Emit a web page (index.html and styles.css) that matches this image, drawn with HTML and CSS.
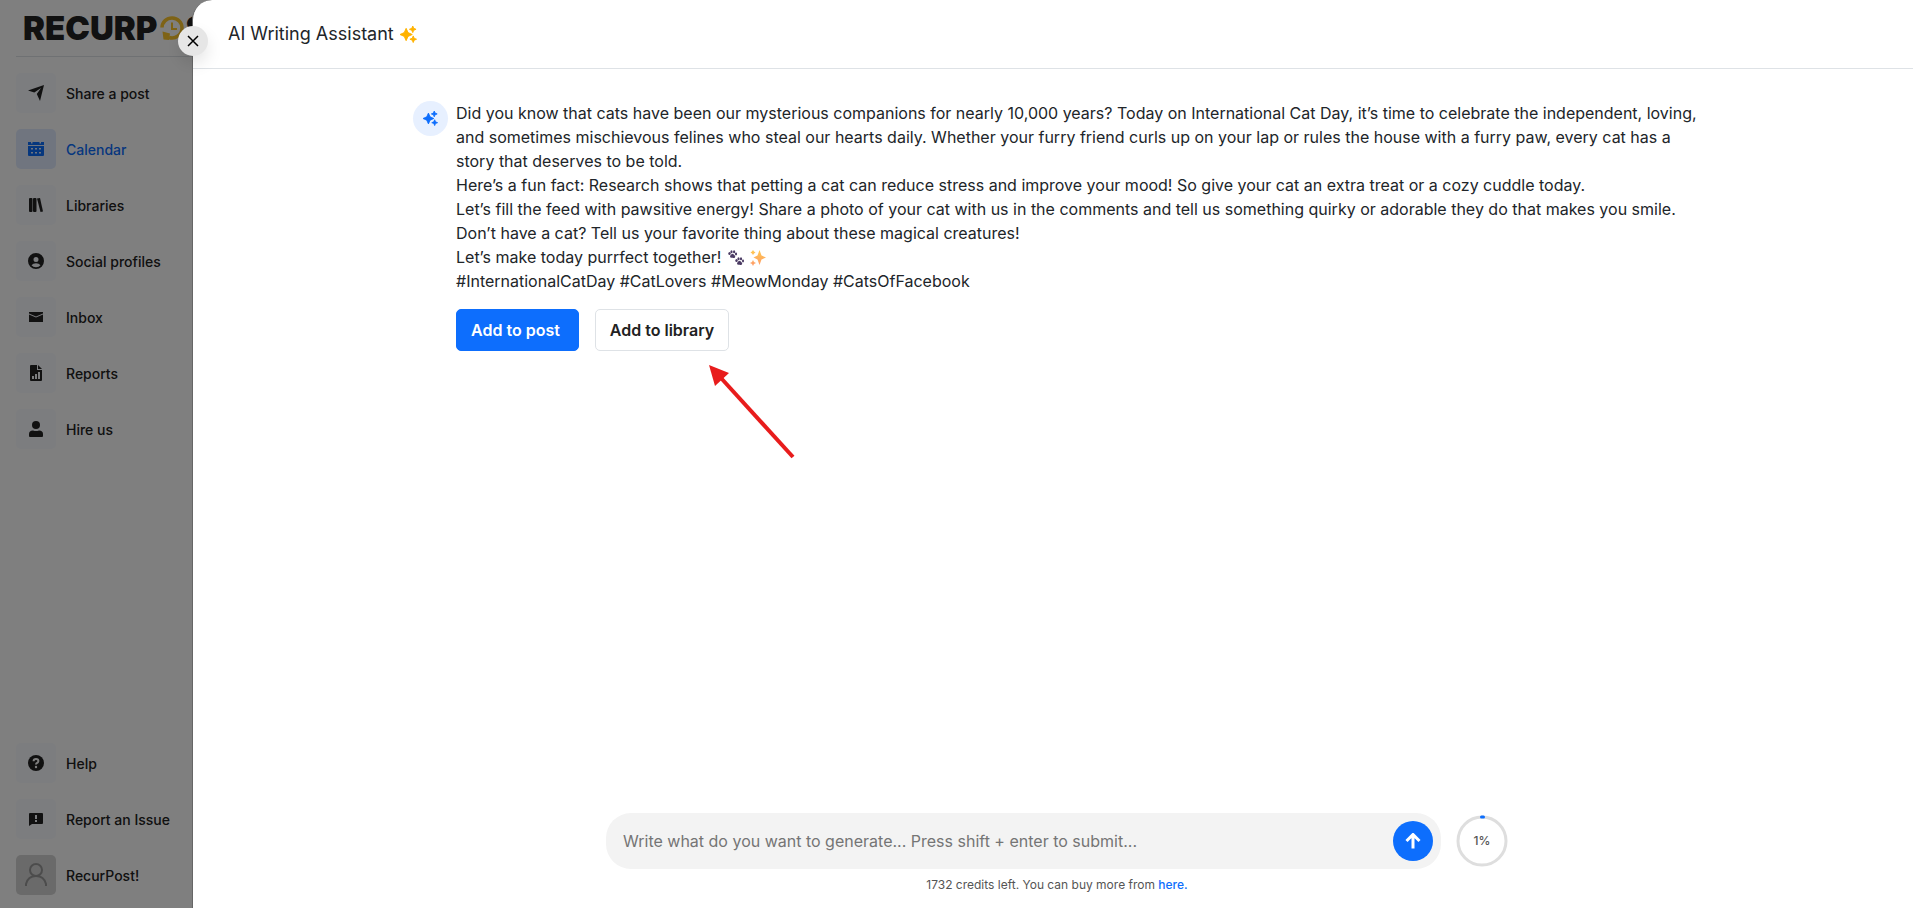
FILE: index.html
```html
<!DOCTYPE html>
<html lang="en">
<head>
<meta charset="UTF-8">
<meta name="viewport" content="width=device-width, initial-scale=1.0">
<title>AI Writing Assistant</title>
<link rel="stylesheet" href="styles.css">
</head>
<body>

<!-- Sidebar -->
<aside class="sidebar">
  <div class="logo">
    <span>RECURP</span>
    <svg class="logo-clock" viewBox="0 0 24 24" aria-hidden="true">
      <path d="M2 11.500A10 9.800 0 0 1 22 12A10 10 0 0 1 9 21.500" fill="none" stroke="#fcc62c" stroke-width="3.500"/>
      <path d="M2.500 15.500L10 17.500L9 24L3.500 23.500Z" fill="#fcc62c"/>
      <path d="M12 6.500V13H17" fill="none" stroke="#fcc62c" stroke-width="2"/>
    </svg>
    <span>ST</span>
  </div>
  <nav class="menu">
    <a class="menu-item" href="#">
      <span class="menu-icon"><svg viewBox="0 0 16 16"><path d="M0 5.500L16 0L12 16L8.800 9L13 3L6.300 7.500Z"/></svg></span>
      Share a post
    </a>
    <a class="menu-item active" href="#">
      <span class="menu-icon"><svg viewBox="0 0 16 16"><path fill-rule="evenodd" d="M0 1H3V2.500H4.500V1H11.500V2.500H13V1H16V4H0ZM0 5H16V14Q16 15 15 15H1Q0 15 0 14ZM3 7V8.500H5V7ZM7 7V8.500H9V7ZM11 7V8.500H13V7ZM3 11V12.500H5V11ZM7 11V12.500H9V11ZM11 11V12.500H13V11Z"/></svg></span>
      Calendar
    </a>
    <a class="menu-item" href="#">
      <span class="menu-icon"><svg viewBox="0 0 16 16"><rect x="1" y="1" width="3.500" height="14" rx="1"/><rect x="5" y="1" width="3.500" height="14" rx="1"/><path d="M9 1.500L12 1L15 14.400L12.500 15Z"/></svg></span>
      Libraries
    </a>
    <a class="menu-item" href="#">
      <span class="menu-icon"><svg viewBox="0 0 16 16"><path fill-rule="evenodd" d="M8 0A8 8 0 1 0 8 16A8 8 0 1 0 8 0ZM8 4A2.500 2.500 0 1 1 8 9A2.500 2.500 0 1 1 8 4ZM3.500 12.200Q5 10.300 8 10.300T12.500 12.200Q11 14.300 8 14.300T3.500 12.200Z"/></svg></span>
      Social profiles
    </a>
    <a class="menu-item" href="#">
      <span class="menu-icon"><svg viewBox="0 0 16 16"><path d="M1 3H15V4.500L8 7.500L1 4.500ZM1 5.500L8 8.500L15 5.500V13H1Z"/></svg></span>
      Inbox
    </a>
    <a class="menu-item" href="#">
      <span class="menu-icon"><svg viewBox="0 0 16 16"><path fill-rule="evenodd" d="M3 0H9V5H14V15Q14 16 13 16H3Q2 16 2 15V1Q2 0 3 0ZM10 0L14 4H10ZM4 11V14H6V11ZM7 9V14H9V9ZM10 7V14H12V7Z"/></svg></span>
      Reports
    </a>
    <a class="menu-item" href="#">
      <span class="menu-icon"><svg viewBox="0 0 16 16"><circle cx="8" cy="4" r="4"/><path d="M1 15V13Q1 9.500 5 9.500Q8 10.500 11 9.500Q15 9.500 15 13V15Q15 16 14 16H2Q1 16 1 15Z"/></svg></span>
      Hire us
    </a>
  </nav>
  <nav class="menu menu-bottom">
    <a class="menu-item" href="#">
      <span class="menu-icon"><svg viewBox="0 0 16 16"><circle cx="8" cy="8" r="8"/><path class="cut" d="M5.600 6.200Q5.600 4 8 4T10.400 6.100Q10.400 7.300 9.200 7.900Q8 8.500 8 9.600"/><circle class="cut-dot" cx="8" cy="12" r="1.200"/></svg></span>
      Help
    </a>
    <a class="menu-item" href="#">
      <span class="menu-icon"><svg viewBox="0 0 16 16"><path fill-rule="evenodd" d="M2 2H14Q15 2 15 3V12Q15 13 14 13H4L1 15V3Q1 2 2 2ZM7 4V8H9V4ZM7 9V11H9V9Z"/></svg></span>
      Report an Issue
    </a>
    <a class="menu-item" href="#">
      <span class="menu-icon user"><svg viewBox="0 0 24 24"><circle cx="12" cy="7" r="6"/><path d="M2 23V21Q4 13 12 13T22 21V23"/></svg></span>
      RecurPost!
    </a>
  </nav>
</aside>

<div class="overlay"></div>

<!-- AI drawer -->
<main class="drawer">
  <button class="close" type="button" aria-label="Close">
    <svg viewBox="0 0 10 10"><path d="M0 0L10 10M10 0L0 10"/></svg>
  </button>

  <header class="drawer-header">
    <h1>AI Writing Assistant</h1>
    <svg class="stars" viewBox="0 0 18 18" aria-hidden="true"><path d="M6.500 2.500L8.500 7L13 9L8.500 11L6.500 15.500L4.500 11L0 9L4.500 7ZM13.500 0L14.500 2.500L17 3.500L14.500 4.500L13.500 7L12.500 4.500L10 3.500L12.500 2.500ZM14 10.500L15 13L17.500 14L15 15L14 17.500L13 15L10.500 14L13 13Z"/></svg>
  </header>

  <section class="chat">
    <div class="avatar">
      <svg class="stars" viewBox="0 0 18 18" aria-hidden="true"><path d="M6.500 2.500L8.500 7L13 9L8.500 11L6.500 15.500L4.500 11L0 9L4.500 7ZM13.500 0L14.500 2.500L17 3.500L14.500 4.500L13.500 7L12.500 4.500L10 3.500L12.500 2.500ZM14 10.500L15 13L17.500 14L15 15L14 17.500L13 15L10.500 14L13 13Z"/></svg>
    </div>
    <div class="message">
      <p>Did you know that cats have been our mysterious companions for nearly 10,000 years? Today on International Cat Day, it’s time to celebrate the independent, loving, and sometimes mischievous felines who steal our hearts daily. Whether your furry friend curls up on your lap or rules the house with a furry paw, every cat has a story that deserves to be told.</p>
      <p>Here’s a fun fact: Research shows that petting a cat can reduce stress and improve your mood! So give your cat an extra treat or a cozy cuddle today.</p>
      <p>Let’s fill the feed with pawsitive energy! Share a photo of your cat with us in the comments and tell us something quirky or adorable they do that makes you smile.</p>
      <p>Don’t have a cat? Tell us your favorite thing about these magical creatures!</p>
      <p>Let’s make today purrfect together!
        <svg class="emoji" viewBox="0 0 16 16" role="img" aria-label="paw prints">
          <g fill="#4b3b63">
            <ellipse cx="1.500" cy="3.500" rx="1.200" ry="1.500"/><ellipse cx="3.500" cy="1.700" rx="1.100" ry="1.500"/><ellipse cx="6.100" cy="1.700" rx="1.100" ry="1.500"/><ellipse cx="8" cy="4" rx="1.100" ry="1.400"/><path d="M4.500 3.800Q6 4 7.200 6.300Q7.500 8.500 4.600 7.700Q2 8.300 2 6.300Q2.800 4 4.500 3.800Z"/>
            <ellipse cx="8.500" cy="10.500" rx="1.200" ry="1.500"/><ellipse cx="10.500" cy="8.700" rx="1.100" ry="1.500"/><ellipse cx="13" cy="8.700" rx="1.100" ry="1.500"/><ellipse cx="15" cy="11" rx="1" ry="1.400"/><path d="M11.500 10.800Q13 11 14.200 13.300Q14.500 15.500 11.600 14.700Q9 15.300 9 13.300Q9.800 11 11.500 10.800Z"/>
          </g>
        </svg>
        <svg class="emoji" viewBox="0 0 16 16" role="img" aria-label="sparkles">
          <defs><linearGradient id="spark" x1="0" y1="0" x2="0" y2="1"><stop offset="0" stop-color="#ffc94d"/><stop offset="1" stop-color="#ff9a6b"/></linearGradient></defs>
          <path fill="url(#spark)" d="M9.500 0L11.500 5.500L16 7.500L11.500 9.500L9.500 15L7.500 9.500L3.500 7.500L7.500 5.500ZM3 0L4 1.500L5.500 2.500L4 3.500L3 5L2 3.500L.5 2.500L2 1.500ZM3 10L4 12L6 13L4 14L3 16L2 14L0 13L2 12Z"/>
        </svg>
      </p>
      <p>#InternationalCatDay #CatLovers #MeowMonday #CatsOfFacebook</p>
      <div class="actions">
        <button class="btn btn-primary" type="button">Add to post</button>
        <button class="btn" type="button">Add to library</button>
        <svg class="arrow" viewBox="0 0 86 94" aria-hidden="true"><path class="arrow-line" d="M12 13L84 92"/><path class="arrow-head" d="M0 0L20 8L6 21Z"/></svg>
      </div>
    </div>
  </section>

  <footer class="composer">
    <form class="composer-row">
      <div class="prompt">
        <input type="text" aria-label="Prompt" placeholder="Write what do you want to generate... Press shift + enter to submit...">
        <button class="send" type="button" aria-label="Send">
          <svg viewBox="0 0 16 16"><path d="M8 15.500V2M1.500 8L8 1.500L14.500 8"/></svg>
        </button>
      </div>
      <div class="usage">
        <svg viewBox="0 0 52 52" aria-hidden="true"><circle cx="26" cy="26" r="24"/><path d="M25.500 2H27.500"/></svg>
        <span>1%</span>
      </div>
    </form>
    <p class="credits">1732 credits left. You can buy more from <a href="#">here.</a></p>
  </footer>
</main>

</body>
</html>
```
FILE: styles.css
```css
* {
  box-sizing: border-box;
}
body {
  margin: 0;
  min-height: 100vh;
  font-family: Inter, "Liberation Sans", sans-serif;
  font-size: 16px;
  line-height: 24px;
  color: #212529;
  background: #fff;
}
button, input {
  font: inherit;
}
p, h1 {
  margin: 0;
}

/* Sidebar */
.sidebar {
  width: 240px;
  min-height: 100vh;
  padding: 0 16px 11px;
  display: flex;
  flex-direction: column;
}
.logo {
  display: flex;
  align-items: center;
  height: 57px;
  padding-left: 7px;
  border-bottom: 1px solid #dee2e6;
  font-size: 33px;
  font-weight: 900;
  color: #222;
}
.logo-clock {
  flex: none;
  width: 24px;
  height: 24px;
  margin: 0 1px 0 3px;
}
.menu {
  display: flex;
  flex-direction: column;
  gap: 14px;
  padding-top: 16px;
}
.menu-bottom {
  margin-top: auto;
}
.menu-item {
  display: flex;
  gap: 10px;
  font-size: 14px;
  line-height: 42px;
  font-weight: 500;
  color: #222;
  text-decoration: none;
}
.menu-icon {
  display: flex;
  align-items: center;
  justify-content: center;
  width: 40px;
  height: 40px;
  border-radius: 5px;
  background: #f8faff;
}
.menu-icon svg {
  width: 16px;
  height: 16px;
  fill: #222;
}
.menu-icon .cut {
  fill: none;
  stroke: #fff;
  stroke-width: 2;
}
.menu-icon .cut-dot {
  fill: #fff;
}
.menu-item.active {
  color: #0d6efd;
}
.menu-item.active .menu-icon {
  background: #e0ebff;
}
.menu-item.active svg {
  fill: #0d6efd;
}
.menu-icon.user {
  background: #d4d4d4;
}
.menu-icon.user svg {
  width: 24px;
  height: 24px;
  fill: none;
  stroke: #999;
  stroke-width: 2;
}

.overlay {
  position: fixed;
  inset: 0;
  background: rgba(0, 0, 0, 0.5);
}

/* Drawer */
.drawer {
  position: fixed;
  top: 0;
  right: 0;
  bottom: 0;
  left: 192px;
  display: flex;
  flex-direction: column;
  background: #fff;
  border-left: 1px solid #666;
  border-top-left-radius: 20px;
}
.close {
  position: absolute;
  top: 26px;
  left: -15px;
  display: flex;
  align-items: center;
  justify-content: center;
  width: 30px;
  height: 30px;
  padding: 0;
  border: none;
  border-radius: 50%;
  background: #e6e6e6;
  box-shadow: 0 8px 16px rgba(0, 0, 0, 0.1);
  cursor: pointer;
}
.close svg {
  width: 10px;
  height: 10px;
  overflow: visible;
  stroke: #000;
  stroke-width: 1.5;
}
.drawer-header {
  display: flex;
  align-items: center;
  gap: 6px;
  height: 69px;
  padding: 0 35px;
  border-bottom: 1px solid #dee2e6;
}
.drawer-header h1 {
  font-size: 18px;
  font-weight: 400;
}
.stars {
  width: 17px;
  height: 17px;
  fill: #ffb300;
  stroke: #ffb300;
  stroke-linejoin: round;
}

/* Chat */
.chat {
  flex: 1;
  display: flex;
  align-items: flex-start;
  gap: 8px;
  width: 75%;
  margin: 0 auto;
  padding: 32px 0 0 5px;
}
.avatar {
  flex: none;
  display: flex;
  align-items: center;
  justify-content: center;
  width: 35px;
  height: 35px;
  border-radius: 50%;
  background: #e7f0ff;
}
.avatar .stars {
  width: 15px;
  height: 15px;
  fill: #0d6efd;
  stroke: #0d6efd;
}
.emoji {
  width: 16px;
  height: 16px;
  margin-left: 2px;
  vertical-align: -3px;
}
.actions {
  position: relative;
  display: flex;
  gap: 16px;
  margin-top: 16px;
}
.btn {
  height: 42px;
  padding: 0 14px;
  border: 1px solid #dee2e6;
  border-radius: 5px;
  background: #fff;
  color: #222;
  font-weight: 600;
  cursor: pointer;
}
.btn-primary {
  padding-right: 18px;
  border-color: #0d6efd;
  background: #0d6efd;
  color: #fff;
}
.arrow {
  position: absolute;
  top: 56px;
  left: 253px;
  width: 86px;
  height: 94px;
}
.arrow-line {
  stroke: #e81c1c;
  stroke-width: 4;
}
.arrow-head {
  fill: #e81c1c;
}

/* Prompt box */
.composer {
  width: 910px;
  max-width: 100%;
  margin: 0 auto;
  padding: 0 0 11px 8px;
}
.composer-row {
  display: flex;
  align-items: center;
  gap: 15px;
}
.prompt {
  flex: 1;
  display: flex;
  align-items: center;
  height: 56px;
  padding: 0 8px 0 17px;
  border-radius: 25px;
  background: #f3f3f3;
}
.prompt input {
  flex: 1;
  min-width: 0;
  padding: 0;
  border: none;
  outline: none;
  background: none;
}
.prompt input::placeholder {
  color: #757575;
}
.send {
  display: flex;
  align-items: center;
  justify-content: center;
  width: 40px;
  height: 40px;
  padding: 0;
  border: none;
  border-radius: 50%;
  background: #0d6efd;
  cursor: pointer;
}
.send svg {
  width: 16px;
  height: 16px;
  fill: none;
  stroke: #fff;
  stroke-width: 3;
}
.usage {
  display: grid;
  place-items: center;
  width: 52px;
  height: 52px;
  font-size: 12px;
  font-weight: 500;
  color: #555;
}
.usage svg, .usage span {
  grid-area: 1 / 1;
}
.usage svg {
  width: 52px;
  height: 52px;
  fill: none;
  stroke: #dedede;
  stroke-width: 3;
}
.usage path {
  stroke: #0d6efd;
  stroke-linecap: round;
}
.credits {
  margin-top: 4px;
  font-size: 12px;
  text-align: center;
  color: #555;
}
.credits a {
  color: #0d6efd;
  font-weight: 500;
  text-decoration: none;
}
```
